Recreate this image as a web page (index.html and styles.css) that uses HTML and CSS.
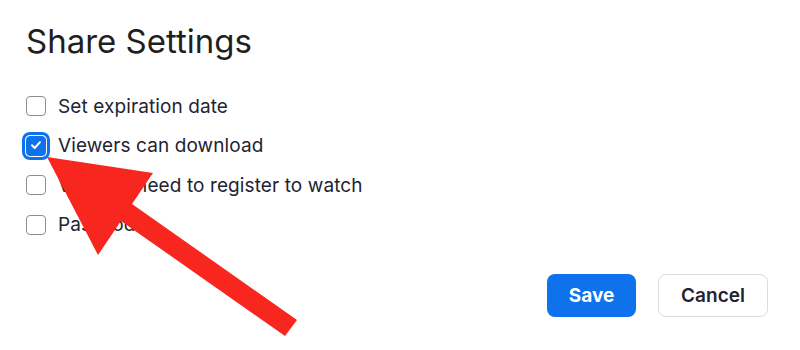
FILE: index.html
```html
<!DOCTYPE html>
<html lang="en">
<head>
  <meta charset="UTF-8">
  <title>Share Settings</title>
  <link rel="stylesheet" href="styles.css">
</head>
<body>
  <div class="dialog">
    <h2 class="title">Share Settings</h2>

    <div class="options">
      <label class="option">
        <span class="box"></span>
        <span class="label">Set expiration date</span>
      </label>
      <label class="option">
        <span class="box checked">
          <svg viewBox="0 0 20 20" width="20" height="20"><path d="M6 10.3l2.7 2.7 5.3-5.8" fill="none" stroke="#fff" stroke-width="2" stroke-linecap="round" stroke-linejoin="round"/></svg>
        </span>
        <span class="label">Viewers can download</span>
      </label>
      <label class="option">
        <span class="box"></span>
        <span class="label">Viewers need to register to watch</span>
      </label>
      <label class="option">
        <span class="box"></span>
        <span class="label">Passcode</span>
      </label>
    </div>

    <div class="actions">
      <button class="btn btn-primary">Save</button>
      <button class="btn btn-default">Cancel</button>
    </div>
  </div>

  <svg class="arrow" viewBox="0 0 800 350" width="800" height="350">
    <polygon points="47,157 153,173 132,204 297,320 285,336 121,221 98,255" fill="#f7261f"/>
  </svg>
</body>
</html>
```

FILE: styles.css
```css
* {
  margin: 0;
  padding: 0;
  box-sizing: border-box;
}

body {
  font-family: Inter, 'Noto Sans', Arial, sans-serif;
  background: #ffffff;
  color: #232333;
  width: 800px;
  height: 350px;
  overflow: hidden;
  position: relative;
}

.dialog {
  padding: 21px 32px 0 26px;
}

.title {
  font-size: 33px;
  font-weight: 400;
  color: #1f1f1f;
  line-height: 40px;
  margin-bottom: 35px;
}

.options {
  display: flex;
  flex-direction: column;
  gap: 19.5px;
}

.option {
  display: flex;
  align-items: center;
  gap: 12px;
  height: 20px;
}

.box {
  width: 20px;
  height: 20px;
  border: 1.5px solid #8c8c94;
  border-radius: 4px;
  background: #fff;
  display: flex;
}

.box.checked {
  background: #0e72ed;
  border-color: #0e72ed;
  box-shadow: 0 0 0 1px #fff, 0 0 0 4px #0e72ed;
}

.box.checked svg {
  margin: -1.5px;
}

.label {
  font-size: 19px;
  letter-spacing: 0.1px;
  color: #232333;
}

.actions {
  display: flex;
  justify-content: flex-end;
  gap: 22px;
  margin-top: 39px;
}

.btn {
  height: 43px;
  border-radius: 8px;
  font-family: inherit;
  font-size: 19px;
  font-weight: 600;
}

.btn-primary {
  width: 89px;
  background: #0e72ed;
  border: none;
  color: #fff;
  font-weight: 700;
}

.btn-default {
  width: 110px;
  background: #fff;
  border: 1px solid #dcdce0;
  color: #232333;
}

.arrow {
  position: absolute;
  top: 0;
  left: 0;
}
```
